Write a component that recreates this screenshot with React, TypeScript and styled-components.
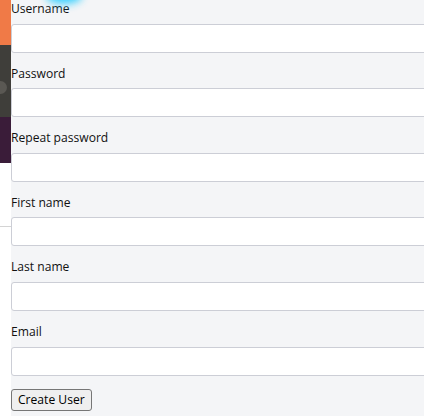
import React from "react";
import styled, { createGlobalStyle } from "styled-components";

const Global = createGlobalStyle`
  html, body { margin: 0; padding: 0; background: #f4f5f7; }
  body { font-family: "Open Sans", "Noto Sans", sans-serif; overflow: hidden; }
`;

const Page = styled.div`
  position: relative;
  display: flex;
  width: 424px;
  height: 416px;
  overflow: hidden;
`;

const Sidebar = styled.div`
  width: 11px;
  flex: none;
  display: flex;
  flex-direction: column;
  background: #ffffff;
`;

const Block = styled.div<{ $bg: string; $h: number }>`
  height: ${(p) => p.$h}px;
  background: ${(p) => p.$bg};
  position: relative;
  overflow: hidden;
`;

const Dot = styled.div`
  position: absolute;
  left: -6px;
  top: 36px;
  width: 13px;
  height: 13px;
  border-radius: 50%;
  background: #5a5853;
`;

const Divider = styled.div`
  height: 63px;
  border-bottom: 1px solid #d4d4d4;
`;

const Main = styled.main`
  flex: 1;
  background: #f4f5f7;
  display: flex;
  flex-direction: column;
  overflow: hidden;
`;

const Field = styled.div`
  display: flex;
  flex-direction: column;
  margin-bottom: 12px;
`;

const Label = styled.label`
  font-size: 12.1px;
  line-height: 17.6px;
  color: #111111;
  margin-bottom: 6px;
`;

const Input = styled.input`
  box-sizing: border-box;
  width: 440px;
  height: 29px;
  border: 1px solid #ccced6;
  border-radius: 3px;
  background: #ffffff;
  font-family: inherit;
  font-size: 13px;
  padding: 0 6px;
  outline: none;
`;

const Button = styled.button`
  align-self: flex-start;
  margin-top: 1px;
  height: 22px;
  padding: 0 6px;
  font-family: "Open Sans", "Noto Sans", sans-serif;
  font-size: 12.1px;
  color: #000;
  background: #efefef;
  border: 1px solid #767676;
  border-radius: 3px;
  line-height: 18px;
`;

const Glow = styled.div`
  position: absolute;
  left: 46px;
  top: -13px;
  width: 36px;
  height: 17px;
  border-radius: 50%;
  background: #22ccff;
  filter: blur(4px);
  opacity: 0.9;
  pointer-events: none;
`;

const fields = [
  { label: "Username", type: "text" },
  { label: "Password", type: "password" },
  { label: "Repeat password", type: "password" },
  { label: "First name", type: "text" },
  { label: "Last name", type: "text" },
  { label: "Email", type: "email" },
];

export default function App() {
  return (
    <>
      <Global />
      <Page>
        <Sidebar>
          <Block $bg="#f07a47" $h={45} />
          <Block $bg="#3f3e3a" $h={72}>
            <Dot />
          </Block>
          <Block $bg="#3a1c39" $h={46} />
          <Divider />
        </Sidebar>
        <Main>
          {fields.map((f) => (
            <Field key={f.label}>
              <Label>{f.label}</Label>
              <Input type={f.type} />
            </Field>
          ))}
          <Button>Create User</Button>
        </Main>
        <Glow />
      </Page>
    </>
  );
}
